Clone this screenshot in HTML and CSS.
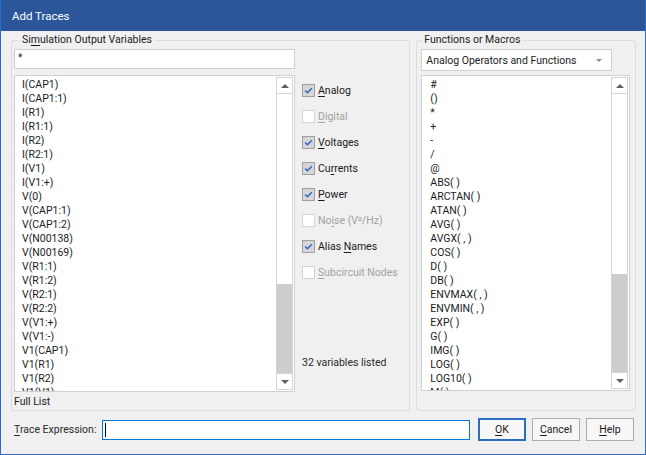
FILE: index.html
```html
<!DOCTYPE html>
<html>
<head>
<meta charset="utf-8">
<link rel="stylesheet" href="styles.css">
</head>
<body>
<div class="window">
  <div class="titlebar">Add Traces</div>
  <div class="body">
    <div class="groups">
      <fieldset class="group group-vars">
        <legend>Si<u>m</u>ulation Output Variables</legend>
        <div class="vars-layout">
          <div class="vars-main">
            <div class="textbox filter">*</div>
            <div class="listbox vars-list">
              <ul class="items">
                <li>I(CAP1)</li><li>I(CAP1:1)</li><li>I(R1)</li><li>I(R1:1)</li><li>I(R2)</li><li>I(R2:1)</li><li>I(V1)</li><li>I(V1:+)</li><li>V(0)</li><li>V(CAP1:1)</li><li>V(CAP1:2)</li><li>V(N00138)</li><li>V(N00169)</li><li>V(R1:1)</li><li>V(R1:2)</li><li>V(R2:1)</li><li>V(R2:2)</li><li>V(V1:+)</li><li>V(V1:-)</li><li>V1(CAP1)</li><li>V1(R1)</li><li>V1(R2)</li><li>V1(V1)</li>
              </ul>
              <div class="scrollbar">
                <div class="sb-btn"><span class="arrow up"></span></div>
                <div class="sb-thumb vars-thumb"></div>
                <div class="sb-track"></div>
                <div class="sb-btn bottom"><span class="arrow down"></span></div>
              </div>
            </div>
            <div class="full-list">Full List</div>
          </div>
          <div class="options">
            <div class="check on"><span class="box"><svg viewBox="0 0 11 11" width="11" height="11"><path d="M2.2 5.6 L4.4 7.7 L8.8 3.2" fill="none" stroke="#2464c4" stroke-width="1.4"/></svg></span><span class="lbl"><u>A</u>nalog</span></div>
            <div class="check off disabled"><span class="box"></span><span class="lbl"><u>D</u>igital</span></div>
            <div class="check on"><span class="box"><svg viewBox="0 0 11 11" width="11" height="11"><path d="M2.2 5.6 L4.4 7.7 L8.8 3.2" fill="none" stroke="#2464c4" stroke-width="1.4"/></svg></span><span class="lbl"><u>V</u>oltages</span></div>
            <div class="check on"><span class="box"><svg viewBox="0 0 11 11" width="11" height="11"><path d="M2.2 5.6 L4.4 7.7 L8.8 3.2" fill="none" stroke="#2464c4" stroke-width="1.4"/></svg></span><span class="lbl">Cu<u>r</u>rents</span></div>
            <div class="check on"><span class="box"><svg viewBox="0 0 11 11" width="11" height="11"><path d="M2.2 5.6 L4.4 7.7 L8.8 3.2" fill="none" stroke="#2464c4" stroke-width="1.4"/></svg></span><span class="lbl"><u>P</u>ower</span></div>
            <div class="check off disabled"><span class="box"></span><span class="lbl">No<u>i</u>se (V²/Hz)</span></div>
            <div class="check on"><span class="box"><svg viewBox="0 0 11 11" width="11" height="11"><path d="M2.2 5.6 L4.4 7.7 L8.8 3.2" fill="none" stroke="#2464c4" stroke-width="1.4"/></svg></span><span class="lbl">Alias <u>N</u>ames</span></div>
            <div class="check off disabled"><span class="box"></span><span class="lbl"><u>S</u>ubcircuit Nodes</span></div>
            <div class="count">32 variables listed</div>
          </div>
        </div>
      </fieldset>
      <fieldset class="group group-funcs">
        <legend>Functions or Macros</legend>
        <div class="select"><span>Analog Operators and Functions</span><span class="select-caret"></span></div>
        <div class="listbox funcs-list">
          <ul class="items">
            <li>#</li><li>()</li><li>*</li><li>+</li><li>-</li><li>/</li><li>@</li><li>ABS( )</li><li>ARCTAN( )</li><li>ATAN( )</li><li>AVG( )</li><li>AVGX( , )</li><li>COS( )</li><li>D( )</li><li>DB( )</li><li>ENVMAX( , )</li><li>ENVMIN( , )</li><li>EXP( )</li><li>G( )</li><li>IMG( )</li><li>LOG( )</li><li>LOG10( )</li><li>M( )</li>
          </ul>
          <div class="scrollbar">
            <div class="sb-btn"><span class="arrow up"></span></div>
            <div class="sb-thumb funcs-thumb"></div>
            <div class="sb-track"></div>
            <div class="sb-btn bottom"><span class="arrow down"></span></div>
          </div>
        </div>
      </fieldset>
    </div>
    <div class="trace-row">
      <div class="trace-label"><u>T</u>race Expression:</div>
      <div class="textbox trace-input"><span class="cursor"></span></div>
      <div class="btn default"><u>O</u>K</div>
      <div class="btn"><u>C</u>ancel</div>
      <div class="btn"><u>H</u>elp</div>
    </div>
  </div>
</div>
</body>
</html>
```

FILE: styles.css
```css
* { box-sizing: border-box; }
html, body {
  margin: 0;
  padding: 0;
  background: #f0f0f0;
}
body {
  font-family: Roboto, "Noto Sans", sans-serif;
  font-size: 10.5px;
  color: #1b1b1b;
}
u { text-decoration: underline; text-underline-offset: 2px; }

.window {
  width: 646px;
  height: 455px;
  background: #f0f0f0;
  border: 1px solid #2a6cc4;
  border-top: none;
  display: flex;
  flex-direction: column;
  overflow: hidden;
}
.titlebar {
  height: 31px;
  margin: 0 -1px;
  background: #2b579a;
  color: #ffffff;
  font-size: 11.5px;
  line-height: 32px;
  padding-left: 12px;
  flex: none;
}
.body {
  padding: 2px 9px 0 10px;
  display: flex;
  flex-direction: column;
}
.groups {
  display: flex;
  gap: 6px;
}
.group {
  margin: 0;
  border: 1px solid #dcdcdc;
  border-radius: 3px;
  min-width: 0;
}
.group legend {
  padding: 0 3px;
  line-height: 14px;
  color: #1b1b1b;
  white-space: nowrap;
}
.group-vars {
  width: 400px;
  padding: 2px 0 1px 2px;
}
.group-vars legend { margin-left: 5px; }
.group-funcs {
  width: 220px;
  padding: 2px 5px 1px 4px;
}

.vars-layout {
  display: flex;
  gap: 7px;
}
.vars-main {
  width: 281px;
  display: flex;
  flex-direction: column;
}
.textbox {
  background: #ffffff;
  border: 1px solid #d0d0d0;
}
.filter {
  height: 20px;
  padding-left: 3px;
  line-height: 16px;
  font-size: 10px;
}
.listbox {
  background: #ffffff;
  border: 1px solid #d0d0d0;
  display: flex;
  overflow: hidden;
}
.vars-list {
  margin-top: 6px;
  height: 317px;
}
.items {
  list-style: none;
  margin: 0;
  padding: 2px 0 0 7px;
  flex: 1;
  overflow: hidden;
  line-height: 14px;
}
.items li { height: 14px; white-space: nowrap; }
.scrollbar {
  width: 17px;
  margin: 1px 1px 1px 0;
  border: 1px solid #d4d4d4;
  display: flex;
  flex-direction: column;
  flex: none;
}
.sb-btn {
  height: 16px;
  border-bottom: 1px solid #d4d4d4;
  background: #ffffff;
  display: flex;
  align-items: center;
  justify-content: center;
  flex: none;
}
.sb-btn.bottom {
  border-bottom: none;
  border-top: 1px solid #d4d4d4;
}
.arrow {
  width: 0;
  height: 0;
  border-left: 4px solid transparent;
  border-right: 4px solid transparent;
}
.arrow.up { border-bottom: 4px solid #606060; }
.arrow.down { border-top: 4px solid #606060; }
.sb-thumb { background: #ffffff; flex: none; }
.vars-thumb { height: 190px; }
.funcs-thumb { height: 180px; }
.sb-track { background: #cdcdcd; flex: 1; }

.full-list {
  line-height: 14px;
  padding: 3px 0 0 0;
  white-space: nowrap;
}

.options {
  flex: 1;
  display: flex;
  flex-direction: column;
  padding-top: 28px;
  white-space: nowrap;
}
.check {
  height: 26px;
  display: flex;
  align-items: center;
  gap: 3px;
}
.box {
  width: 13px;
  height: 13px;
  border: 1px solid #b8b8b8;
  background: #ffffff;
  display: flex;
  align-items: center;
  justify-content: center;
  flex: none;
}
.check.on .box {
  background: #d6d6d6;
  border-color: #a0a0a0;
}
.check.disabled .box { border-color: #d4d4d4; }
.check.disabled .lbl { color: #a2a2a2; }
.count {
  margin-top: 71px;
  line-height: 14px;
  color: #2a2a2a;
}

.select {
  height: 22px;
  background: #ffffff;
  border: 1px solid #d0d0d0;
  width: 191px;
  display: flex;
  align-items: center;
  justify-content: space-between;
  padding: 0 9px 0 4px;
  white-space: nowrap;
}
.select-caret {
  width: 0;
  height: 0;
  border-left: 3px solid transparent;
  border-right: 3px solid transparent;
  border-top: 3px solid #8a8a8a;
}
.funcs-list {
  margin-top: 4px;
  height: 316px;
}
.funcs-list .items { padding-left: 8px; }

.trace-row {
  margin-top: 7px;
  display: flex;
  align-items: center;
  padding-left: 3px;
}
.trace-label {
  width: 88px;
  color: #2a2a2a;
  white-space: nowrap;
}
.trace-input {
  width: 368px;
  height: 20px;
  border-color: #0078d7;
  display: flex;
  align-items: center;
  padding-left: 2px;
}
.cursor {
  width: 1px;
  height: 14px;
  background: #000;
}
.btn {
  width: 48px;
  height: 23px;
  margin-left: 6px;
  border: 1px solid #adadad;
  background: #f7f7f7;
  display: flex;
  align-items: center;
  justify-content: center;
  color: #1b1b1b;
}
.btn.default {
  margin-left: 8px;
  border: 2px solid #2a6cc4;
}
```
